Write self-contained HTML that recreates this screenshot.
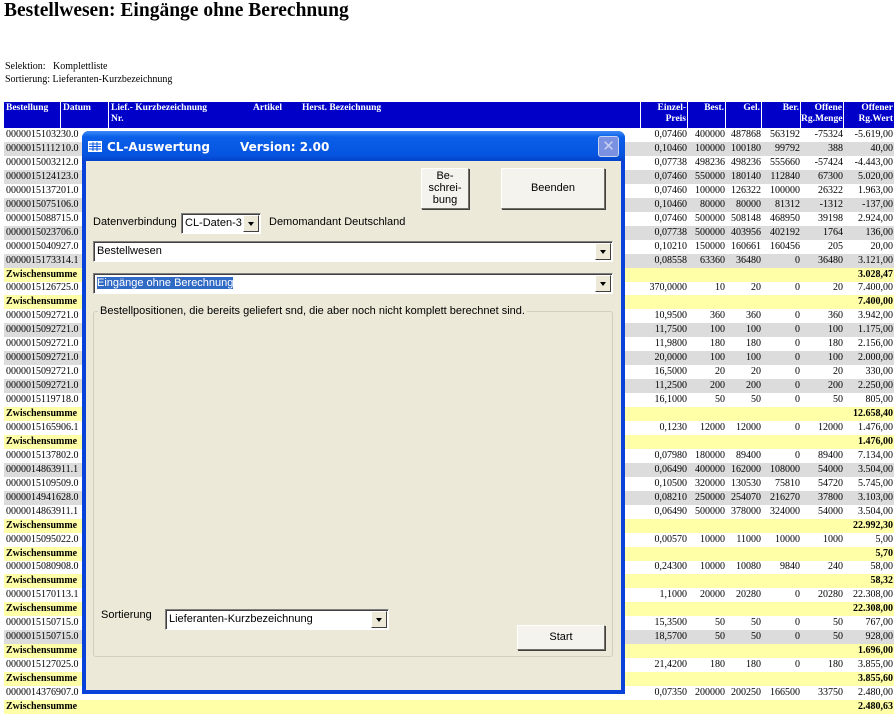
<!DOCTYPE html>
<html><head><meta charset="utf-8"><style>
body{margin:0;width:896px;height:715px;overflow:hidden;background:#fff;font-family:"Liberation Serif",serif;position:relative}
h1{position:absolute;left:4px;top:0;margin:0;font-size:19.5px;font-weight:bold}
.sel{position:absolute;left:5px;font-size:10px}
.r{position:absolute;left:4px;width:890px;height:14px;font-size:10px;line-height:14px}
.r span{position:absolute;top:0;white-space:nowrap}
.g{background:#dcdcdc}.z{background:#ffffa8;font-weight:bold}
.hd{position:absolute;top:102px;height:26px;background:#0000c8;color:#fff;font-size:9.5px;font-weight:bold;line-height:11px;padding-top:1px;box-sizing:border-box;white-space:nowrap}
.dlg{position:absolute;left:82px;top:131px;width:543px;height:563px;background:#0842d8;border-radius:7px 7px 0 0}
.tb{position:absolute;left:0;top:0;width:543px;height:30px;background:linear-gradient(#3d8af7,#0a5fe8 20%,#0654e0 80%,#0443c8);border-radius:7px 7px 0 0;color:#fff;font:bold 12px "DejaVu Sans",sans-serif}
.body{position:absolute;left:4px;top:30px;width:535px;height:529px;background:#ece9d8;font:11px "Liberation Sans",sans-serif}
.btn{position:absolute;background:#f4f3ee;border:1px solid;border-color:#fff #716f64 #716f64 #fff;box-shadow:1px 1px 0 #404040;text-align:center;font-size:11px;box-sizing:border-box}
.cb{position:absolute;background:#fff;border:1px solid;border-color:#808080 #fff #fff #808080;box-shadow:inset 1px 1px 0 #404040;box-sizing:border-box;font-size:11px;line-height:18px;padding-left:3px;white-space:nowrap;overflow:hidden}
.ar{position:absolute;right:1px;top:1px;width:16px;bottom:1px;background:#ece9d8;border:1px solid;border-color:#fff #404040 #404040 #fff;box-sizing:border-box}
.ar:after{content:"";position:absolute;left:4px;top:6px;border:3.5px solid transparent;border-top:4px solid #000}
</style></head><body>
<h1>Bestellwesen: Eingänge ohne Berechnung</h1>
<div class="sel" style="top:61px">Selektion:&nbsp;&nbsp; Komplettliste</div>
<div class="sel" style="top:74px">Sortierung: Lieferanten-Kurzbezeichnung</div>
<div class="hd" style="left:4px;width:56px;padding-left:2px">Bestellung</div>
<div class="hd" style="left:61px;width:47px;padding-left:2px">Datum</div>
<div class="hd" style="left:109px;width:531px;padding-left:2px">Lief.- Kurzbezeichnung<br>Nr.<span style="position:absolute;left:144px;top:1px">Artikel</span><span style="position:absolute;left:193px;top:1px">Herst. Bezeichnung</span></div>
<div class="hd" style="left:641px;width:46px;text-align:right;padding-right:1px">Einzel-<br>Preis</div>
<div class="hd" style="left:688px;width:37px;text-align:right;padding-right:1px">Best.</div>
<div class="hd" style="left:726px;width:35px;text-align:right;padding-right:1px">Gel.</div>
<div class="hd" style="left:762px;width:38px;text-align:right;padding-right:1px">Ber.</div>
<div class="hd" style="left:801px;width:42px;text-align:right;padding-right:1px">Offene<br>Rg.Menge</div>
<div class="hd" style="left:844px;width:50px;text-align:right;padding-right:1px">Offener<br>Rg.Wert</div>
<div id="rows"></div>
<script>
var d=[["151032","30.0","0,07460","400000","487868","563192","-75324","-5.619,00",0],
["151112","10.0","0,10460","100000","100180","99792","388","40,00",1],
["150032","12.0","0,07738","498236","498236","555660","-57424","-4.443,00",0],
["151241","23.0","0,07460","550000","180140","112840","67300","5.020,00",1],
["151372","01.0","0,07460","100000","126322","100000","26322","1.963,00",0],
["150751","06.0","0,10460","80000","80000","81312","-1312","-137,00",1],
["150887","15.0","0,07460","500000","508148","468950","39198","2.924,00",0],
["150237","06.0","0,07738","500000","403956","402192","1764","136,00",1],
["150409","27.0","0,10210","150000","160661","160456","205","20,00",0],
["151733","14.1","0,08558","63360","36480","0","36480","3.121,00",1],
["Z","3.028,47"],
["151267","25.0","370,0000","10","20","0","20","7.400,00",0],
["Z","7.400,00"],
["150927","21.0","10,9500","360","360","0","360","3.942,00",0],
["150927","21.0","11,7500","100","100","0","100","1.175,00",1],
["150927","21.0","11,9800","180","180","0","180","2.156,00",0],
["150927","21.0","20,0000","100","100","0","100","2.000,00",1],
["150927","21.0","16,5000","20","20","0","20","330,00",0],
["150927","21.0","11,2500","200","200","0","200","2.250,00",1],
["151197","18.0","16,1000","50","50","0","50","805,00",0],
["Z","12.658,40"],
["151659","06.1","0,1230","12000","12000","0","12000","1.476,00",0],
["Z","1.476,00"],
["151378","02.0","0,07980","180000","89400","0","89400","7.134,00",0],
["148639","11.1","0,06490","400000","162000","108000","54000","3.504,00",1],
["151095","09.0","0,10500","320000","130530","75810","54720","5.745,00",0],
["149416","28.0","0,08210","250000","254070","216270","37800","3.103,00",1],
["148639","11.1","0,06490","500000","378000","324000","54000","3.504,00",0],
["Z","22.992,30"],
["150950","22.0","0,00570","10000","11000","10000","1000","5,00",0],
["Z","5,70"],
["150809","08.0","0,24300","10000","10080","9840","240","58,00",0],
["Z","58,32"],
["151701","13.1","1,1000","20000","20280","0","20280","22.308,00",0],
["Z","22.308,00"],
["151507","15.0","15,3500","50","50","0","50","767,00",0],
["151507","15.0","18,5700","50","50","0","50","928,00",1],
["Z","1.696,00"],
["151270","25.0","21,4200","180","180","0","180","3.855,00",0],
["Z","3.855,60"],
["143769","07.0","0,07350","200000","200250","166500","33750","2.480,00",0],
["Z","2.480,63"]];
var R=[683,721,757,796,839,889],h="";
d.forEach(function(r,i){var t=128+i*13.95;
if(r[0]=="Z"){h+='<div class="r z" style="top:'+t+'px"><span style="left:2px">Zwischensumme</span><span style="right:1px">'+r[1]+'</span></div>';return;}
h+='<div class="r'+(r[8]?' g':'')+'" style="top:'+t+'px"><span style="left:2px">00000'+r[0]+'</span><span style="left:57px">'+r[1]+'</span>';
for(var k=0;k<6;k++)h+='<span style="right:'+(890-R[k])+'px">'+r[2+k]+'</span>';
h+='</div>';});
document.getElementById('rows').innerHTML=h;
</script>
<div class="dlg">
<div class="tb">
<svg style="position:absolute;left:6px;top:10px" width="14" height="11"><rect x="0.5" y="0.5" width="13" height="10" fill="#fff" stroke="#fff"/><path d="M1 3H13M1 5.5H13M1 8H13M5 1V10M9 1V10" stroke="#0654e0"/></svg>
<span style="position:absolute;left:25px;top:9px">CL-Auswertung</span>
<span style="position:absolute;left:158px;top:9px">Version: 2.00</span>
<div style="position:absolute;left:516px;top:5px;width:21px;height:21px;border:1px solid #c8d4f4;border-radius:3px;background:#7a90e0;box-sizing:border-box;color:#c8d0f0;font:15px 'DejaVu Sans';text-align:center;line-height:19px">✕</div>
</div>
<div class="body">
<div class="btn" style="left:335px;top:7px;width:48px;height:41px;line-height:12px;padding-top:1px">Be-<br>schrei-<br>bung</div>
<div class="btn" style="left:415px;top:7px;width:104px;height:41px;line-height:39px">Beenden</div>
<span style="position:absolute;left:7px;top:55px">Datenverbindung</span>
<div class="cb" style="left:95px;top:52px;width:80px;height:21px">CL-Daten-3<div class="ar"></div></div>
<span style="position:absolute;left:183px;top:55px">Demomandant Deutschland</span>
<div class="cb" style="left:7px;top:80px;width:520px;height:21px">Bestellwesen<div class="ar"></div></div>
<div class="cb" style="left:7px;top:112px;width:520px;height:21px"><span style="background:#316ac5;color:#fff">Eingänge ohne Berechnung</span><div class="ar"></div></div>
<div style="position:absolute;left:7px;top:150px;width:520px;height:346px;border:1px solid #d0d0bf;border-radius:3px;box-sizing:border-box"></div>
<span style="position:absolute;left:12px;top:144px;background:#ece9d8;padding:0 2px">Bestellpositionen, die bereits geliefert snd, die aber noch nicht komplett berechnet sind.</span>
<span style="position:absolute;left:15px;top:448px">Sortierung</span>
<div class="cb" style="left:79px;top:448px;width:224px;height:21px">Lieferanten-Kurzbezeichnung<div class="ar"></div></div>
<div class="btn" style="left:431px;top:464px;width:88px;height:25px;line-height:23px">Start</div>
</div>
</div>
</body></html>
